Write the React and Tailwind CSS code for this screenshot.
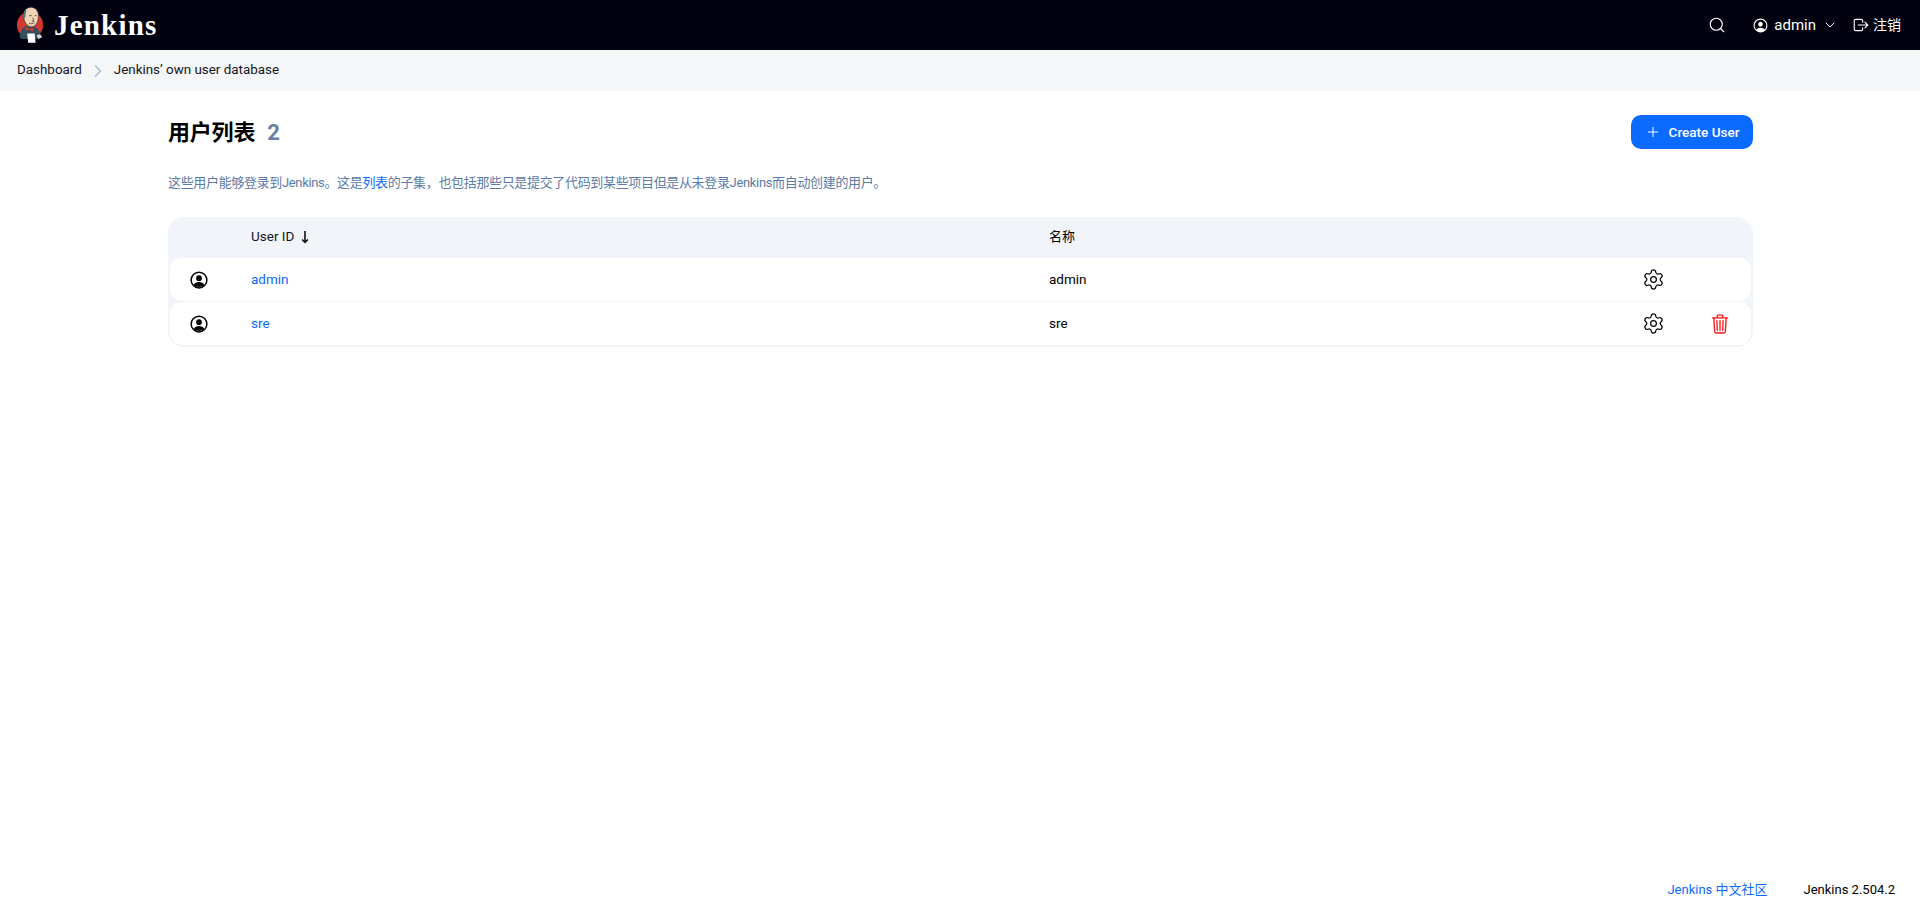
import React from 'react';
import { Settings, Search, ChevronDown, ChevronRight, Plus } from 'lucide-react';
import { IoPersonCircleOutline, IoLogOutOutline, IoTrashOutline } from 'react-icons/io5';

const fontStack = { fontFamily: 'Roboto, "Noto Sans CJK SC", sans-serif' };

const UserIcon = ({ className }) => (
  <svg viewBox="0 0 24 24" className={className}>
    <circle cx="12" cy="12" r="10.5" fill="none" stroke="currentColor" strokeWidth="2" />
    <circle cx="12" cy="9.5" r="3.8" fill="currentColor" />
    <path d="M5 18.500c1.400-2.600 4-3.700 7-3.700s5.600 1.100 7 3.700a10 10 0 0 1-14 0z" fill="currentColor" />
  </svg>
);

const SortArrow = () => (
  <svg viewBox="0 0 8 14" className="h-[14px] w-[8px] text-black" fill="none" stroke="currentColor" strokeWidth="1.500">
    <path d="M4 1v11.500M1.200 9.500 4 12.500l2.800-3" />
  </svg>
);

const JenkinsLogo = () => (
  <svg viewBox="0 0 30 40" className="h-[38px] w-[28px]">
    <ellipse cx="15" cy="20" rx="14" ry="14.500" fill="#d33833" />
    <path d="M4 34c0-7 3-12 7-13l9 1c4 2 6 6 6 11l-3 2H7z" fill="#335061" />
    <path d="M8 10c0-5 3-9 8-9s8 4 8 9c0 6-2 11-7 12-5 0-9-6-9-12z" fill="#f0d6b7" stroke="#231f20" strokeWidth="0.600" />
    <path d="M8 10c0-2 1-5 3-7 0 3-1 5-1 8l-1 3z" fill="#49728b" />
    <path d="M14 10h3M20 10h2M18 12l1 4-2 0M14 18c2 1 4 1 6-1" stroke="#231f20" strokeWidth="0.700" fill="none" />
    <path d="M14 24l-4-2 0 4 4-1 4 2 1-4z" fill="#d33833" />
    <path d="M12 29h8l1 10h-8z" fill="#fff" />
    <path d="M22 31l4-1 2 3-4 2z" fill="#dcd9d8" />
  </svg>
);

const Row = ({ id, canDelete, last }) => (
  <div className={`grid h-[43px] grid-cols-[81px_798px_593px_67px_1fr] items-center rounded-xl bg-white ${last ? '' : 'mb-[1px]'}`}>
    <div className="pl-[20px]">
      <UserIcon className="h-[18px] w-[18px] text-black" />
    </div>
    <a className="text-[13.5px] text-[#0b6aff]">{id}</a>
    <div className="text-[13.5px] text-black">{id}</div>
    <div>
      <Settings className="h-[23px] w-[23px] text-black" strokeWidth={1.300} />
    </div>
    <div>
      {canDelete && <IoTrashOutline className="h-[22px] w-[22px] text-[#ff1a1a]" />}
    </div>
  </div>
);

export default function App() {
  return (
    <div className="flex min-h-[919px] flex-col bg-white" style={fontStack}>
      <header className="flex h-[50px] items-center justify-between bg-[#01010f] pl-[16px] pr-[19px] text-white">
        <div className="flex items-center gap-[10px]">
          <JenkinsLogo />
          <span className="text-[29px] font-bold leading-none tracking-[1.2px]" style={{ fontFamily: '"Liberation Serif", serif' }}>Jenkins</span>
        </div>
        <div className="flex items-center text-[15px]">
          <Search className="mr-[26px] h-[18px] w-[18px]" strokeWidth={1.500} />
          <IoPersonCircleOutline className="mr-[5px] h-[17px] w-[17px]" />
          <span>admin</span>
          <ChevronDown className="ml-[6px] mr-[14px] h-[16px] w-[16px]" strokeWidth={1.500} />
          <IoLogOutOutline className="mr-[3px] h-[18px] w-[18px]" />
          <span className="text-[14px]">注销</span>
        </div>
      </header>

      <nav className="flex h-[41px] items-center bg-[#f5f6f8] pl-[17px] text-[13.4px] text-[#14141f]">
        <span>Dashboard</span>
        <ChevronRight className="mx-[6px] h-[20px] w-[20px] text-[#a9bcd6]" strokeWidth={1.800} />
        <span>Jenkins’ own user database</span>
      </nav>

      <main className="flex flex-1 flex-col pl-[168px] pr-[167px]">
        <div className="mt-[24px] flex h-[34px] items-center justify-between">
          <h1 className="flex items-center text-[22px] font-bold tracking-[-0.2px] text-black">
            用户列表
            <span className="ml-[12px] text-[#6681a8]">2</span>
          </h1>
          <button className="flex h-[34px] w-[122px] items-center justify-center gap-[8px] rounded-[10px] bg-[#0b6aff] text-[13.5px] font-medium text-white">
            <Plus className="h-[16px] w-[16px]" strokeWidth={1.500} />
            Create User
          </button>
        </div>

        <p className="mt-[24px] text-[13px] leading-[20px] tracking-[-0.34px] text-[#5b7ba8]">
          这些用户能够登录到Jenkins。这是<a className="text-[#0b6aff]">列表</a>的子集，也包括那些只是提交了代码到某些项目但是从未登录Jenkins而自动创建的用户。
        </p>

        <div className="mt-[24px] rounded-[16px] bg-[#f1f4f8] px-[2px] pb-[2px]">
          <div className="grid h-[41px] grid-cols-[81px_798px_1fr] items-center pb-[2px] text-[13.5px] text-[#14141f]">
            <div />
            <div className="flex items-center gap-[7px]">
              User ID
              <SortArrow />
            </div>
            <div className="text-[13px] text-black">名称</div>
          </div>
          <Row id="admin" canDelete={false} />
          <Row id="sre" canDelete last />
        </div>
      </main>

      <footer className="flex h-[58px] items-center justify-end gap-[36px] pr-[25px] text-[13px] text-black">
        <a className="text-[#0b6aff]">Jenkins 中文社区</a>
        <span>Jenkins 2.504.2</span>
      </footer>
    </div>
  );
}
